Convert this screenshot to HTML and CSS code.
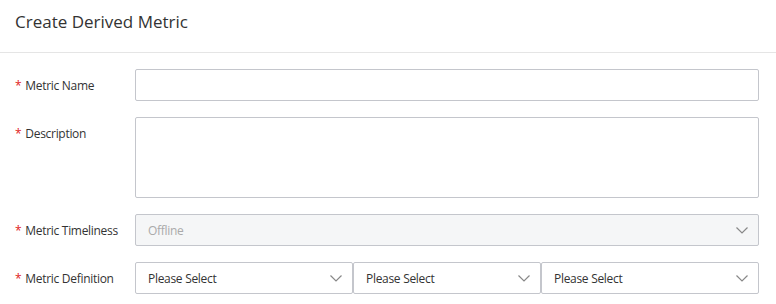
FILE: index.html
```html
<!DOCTYPE html>
<html>
<head>
<meta charset="utf-8">
<link rel="stylesheet" href="styles.css">
</head>
<body>
<div class="dialog">
  <div class="header"><h1 class="title">Create Derived Metric</h1></div>
  <form class="form">
    <div class="row">
      <label class="label"><span class="req">*</span>Metric Name</label>
      <div class="control"><div class="input"></div></div>
    </div>
    <div class="row row-top">
      <label class="label"><span class="req">*</span>Description</label>
      <div class="control"><div class="input textarea"></div></div>
    </div>
    <div class="row">
      <label class="label"><span class="req">*</span>Metric Timeliness</label>
      <div class="control">
        <div class="input select disabled"><span class="value">Offline</span>
          <svg class="chev" width="12" height="7" viewBox="0 0 12 7"><path d="M0.5 0.5 L6 6 L11.5 0.5" fill="none" stroke="currentColor" stroke-width="1.2"/></svg>
        </div>
      </div>
    </div>
    <div class="row">
      <label class="label"><span class="req">*</span>Metric Definition</label>
      <div class="control selects">
        <div class="input select s1"><span class="value">Please Select</span>
          <svg class="chev" width="12" height="7" viewBox="0 0 12 7"><path d="M0.5 0.5 L6 6 L11.5 0.5" fill="none" stroke="currentColor" stroke-width="1.2"/></svg>
        </div>
        <div class="input select s2"><span class="value">Please Select</span>
          <svg class="chev" width="12" height="7" viewBox="0 0 12 7"><path d="M0.5 0.5 L6 6 L11.5 0.5" fill="none" stroke="currentColor" stroke-width="1.2"/></svg>
        </div>
        <div class="input select s3"><span class="value">Please Select</span>
          <svg class="chev" width="12" height="7" viewBox="0 0 12 7"><path d="M0.5 0.5 L6 6 L11.5 0.5" fill="none" stroke="currentColor" stroke-width="1.2"/></svg>
        </div>
      </div>
    </div>
  </form>
</div>
</body>
</html>
```

FILE: styles.css
```css
* { box-sizing: border-box; }
html, body { margin: 0; padding: 0; background: #fff; }
body {
  font-family: "Open Sans", "Noto Sans", "Liberation Sans", sans-serif;
  color: #333;
  width: 776px;
  height: 304px;
  overflow: hidden;
}
.header {
  height: 53px;
  border-bottom: 1px solid #e5e5e5;
  padding: 10px 15px 0;
}
.title {
  margin: 0;
  font-size: 17px;
  font-weight: 400;
  color: #333;
  line-height: 24px;
}
.form {
  padding: 16px 17px 0 15px;
  display: flex;
  flex-direction: column;
  gap: 16px;
}
.row {
  display: flex;
  align-items: center;
}
.row-top { align-items: flex-start; }
.row-top .label { padding-top: 9px; }
.label {
  width: 120px;
  font-size: 12px;
  color: #333;
  line-height: 16px;
  padding-top: 2px;
  letter-spacing: -0.3px;
}
.req { color: #e02020; margin-right: 4px; }
.control { flex: 1; }
.input {
  height: 32px;
  border: 1px solid #c4c6cc;
  border-radius: 2px;
  background: #fff;
}
.textarea { height: 81px; }
.select {
  display: flex;
  align-items: center;
  justify-content: space-between;
  padding: 0 10px 0 12px;
  font-size: 12px;
  color: #333;
  letter-spacing: -0.3px;
}
.select .chev { color: #888; flex: none; }
.disabled { background: #f5f6f7; }
.disabled .value { color: #aaa; }
.selects { display: flex; gap: 0; }
.s1 { width: 218px; }
.s2 { width: 188px; }
.s3 { flex: 1; }
```
